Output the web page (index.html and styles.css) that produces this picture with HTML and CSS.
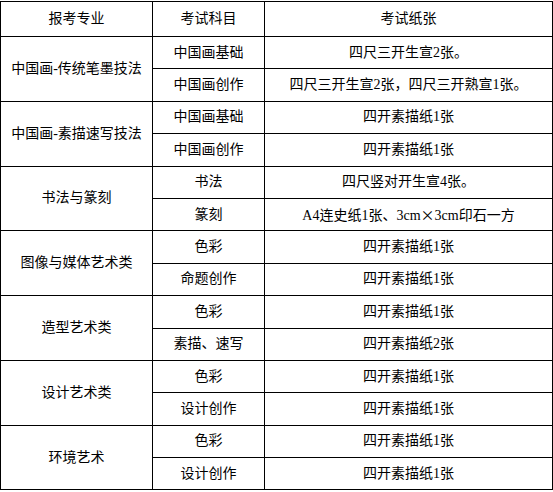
FILE: index.html
```html
<!DOCTYPE html>
<html lang="zh-CN">
<head>
<meta charset="utf-8">
<title>考试纸张</title>
<link rel="stylesheet" href="styles.css">
</head>
<body>
<table class="sheet">
  <colgroup>
    <col class="c1"><col class="c2"><col class="c3">
  </colgroup>
  <thead>
    <tr class="head"><th>报考专业</th><th>考试科目</th><th>考试纸张</th></tr>
  </thead>
  <tbody>
    <tr><td rowspan="2">中国画-传统笔墨技法</td><td>中国画基础</td><td>四尺三开生宣2张。</td></tr>
    <tr><td>中国画创作</td><td>四尺三开生宣2张，四尺三开熟宣1张。</td></tr>
    <tr><td rowspan="2">中国画-素描速写技法</td><td>中国画基础</td><td>四开素描纸1张</td></tr>
    <tr><td>中国画创作</td><td>四开素描纸1张</td></tr>
    <tr><td rowspan="2">书法与篆刻</td><td>书法</td><td>四尺竖对开生宣4张。</td></tr>
    <tr><td>篆刻</td><td>A4连史纸1张、3cm<span class="cjk">×</span>3cm印石一方</td></tr>
    <tr><td rowspan="2">图像与媒体艺术类</td><td>色彩</td><td>四开素描纸1张</td></tr>
    <tr><td>命题创作</td><td>四开素描纸1张</td></tr>
    <tr><td rowspan="2">造型艺术类</td><td>色彩</td><td>四开素描纸1张</td></tr>
    <tr><td>素描、速写</td><td>四开素描纸2张</td></tr>
    <tr><td rowspan="2">设计艺术类</td><td>色彩</td><td>四开素描纸1张</td></tr>
    <tr><td>设计创作</td><td>四开素描纸1张</td></tr>
    <tr><td rowspan="2">环境艺术</td><td>色彩</td><td>四开素描纸1张</td></tr>
    <tr><td>设计创作</td><td>四开素描纸1张</td></tr>
  </tbody>
</table>
</body>
</html>
```
FILE: styles.css
```css
html, body {
  margin: 0;
  padding: 0;
  background: #ffffff;
}
body {
  padding-top: 1px;
  font-family: "Liberation Serif", "Noto Sans CJK SC", sans-serif;
  font-size: 14px;
  color: #000000;
}
.sheet {
  border-collapse: collapse;
  table-layout: fixed;
  width: 552px;
}
.c1 { width: 152px; }
.c2 { width: 112px; }
.c3 { width: 288px; }
.sheet th,
.sheet td {
  border: 1px solid #000000;
  padding: 0;
  text-align: center;
  vertical-align: middle;
  font-weight: normal;
  line-height: 16px;
  white-space: nowrap;
}
.head th { height: 34px; }
.sheet tbody tr { height: 32.4px; }
.cjk { font-family: "Noto Sans CJK SC", sans-serif; }
```
